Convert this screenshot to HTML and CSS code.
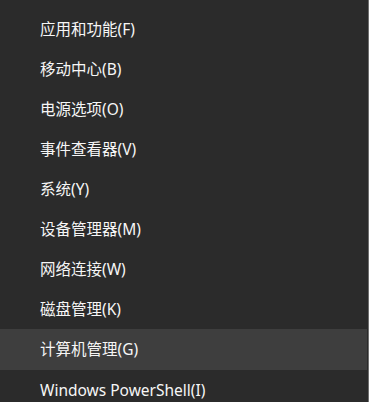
FILE: index.html
```html
<!DOCTYPE html>
<html lang="zh-CN">
<head>
<meta charset="utf-8">
<link rel="stylesheet" href="styles.css">
</head>
<body>
<ul class="menu">
  <li class="item">应用和功能(F)</li>
  <li class="item">移动中心(B)</li>
  <li class="item">电源选项(O)</li>
  <li class="item">事件查看器(V)</li>
  <li class="item">系统(Y)</li>
  <li class="item">设备管理器(M)</li>
  <li class="item">网络连接(W)</li>
  <li class="item">磁盘管理(K)</li>
  <li class="item item--active">计算机管理(G)</li>
  <li class="item">Windows PowerShell(I)</li>
</ul>
</body>
</html>
```
FILE: styles.css
```css
html, body {
  margin: 0;
  padding: 0;
  background: #2b2b2b;
}
body {
  width: 369px;
  height: 402px;
  overflow: hidden;
}
.menu {
  list-style: none;
  margin: 0;
  padding: 9px 0 0 0;
  width: 368px;
  height: 393px;
  border-right: 1px solid #6f6f6f;
  font-family: "Noto Sans", "Noto Sans CJK SC", sans-serif;
  font-size: 15.5px;
  color: #f6f6f6;
}
.item {
  height: 40px;
  line-height: 40px;
  padding-left: 40px;
  margin-right: 1px;
  white-space: nowrap;
}
.item--active {
  background: #3e3e3e;
  height: 41px;
  line-height: 41px;
}
```
